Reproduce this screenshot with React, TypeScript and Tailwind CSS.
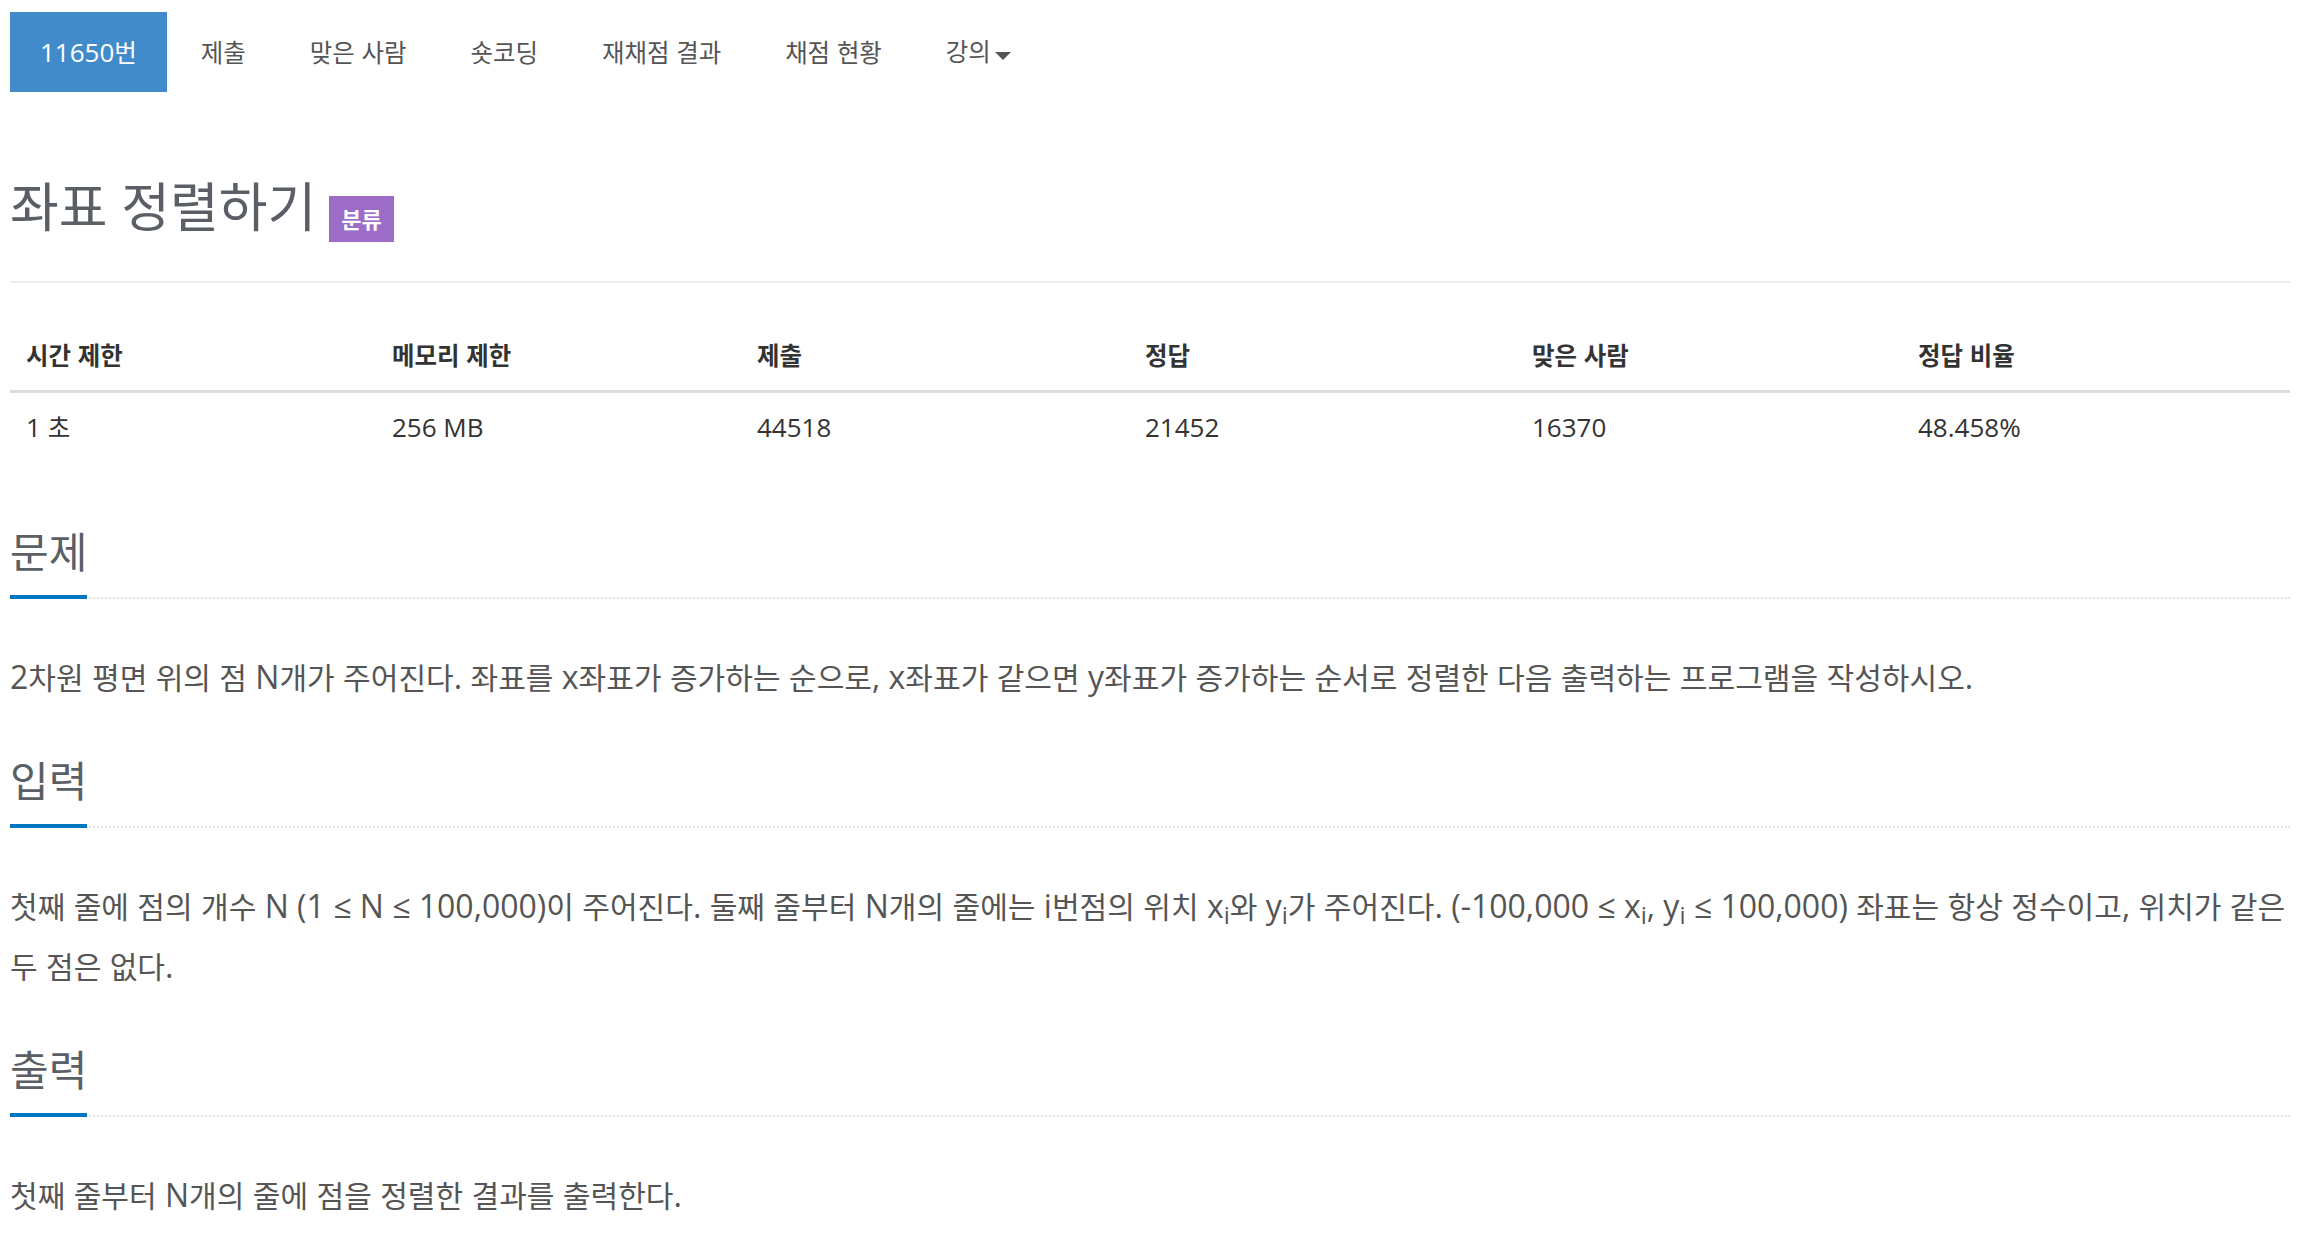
import type { ReactNode } from 'react';

const HANGUL = /([\uAC00-\uD7A3]+)/;

// Hangul runs are set a bit smaller so Noto's full-width glyphs line up with the Latin text
function Ko({ children }: { children: string }) {
    return (
        <>
            {children.split(HANGUL).map((part, i) =>
                HANGUL.test(part) ? (
                    <span key={i} className="text-[0.94em] leading-none">
                        {part}
                    </span>
                ) : (
                    part
                )
            )}
        </>
    );
}

const tabs = ['제출', '맞은 사람', '숏코딩', '재채점 결과', '채점 현황'];

const stats = [
    { label: '시간 제한', value: '1 초' },
    { label: '메모리 제한', value: '256 MB' },
    { label: '제출', value: '44518' },
    { label: '정답', value: '21452' },
    { label: '맞은 사람', value: '16370' },
    { label: '정답 비율', value: '48.458%' },
];

function Section({ title, first, children }: { title: string; first?: boolean; children: ReactNode }) {
    return (
        <section className={first ? 'mt-[68px]' : 'mt-[52px]'}>
            <div className="flex border-b-2 border-dotted border-[#dfe4ea]">
                <h2 className="-mb-[2px] border-b-4 border-[#0076c0] pb-[21px] text-[42px] leading-[44px] font-normal text-[#5a5f66]">
                    {title}
                </h2>
            </div>
            <div className="mt-[48px] text-[32px] leading-[60px] text-[#555]">{children}</div>
        </section>
    );
}

export default function App() {
    return (
        <div className="min-h-screen bg-white font-['Open_Sans','Noto_Sans_CJK_KR',sans-serif] text-[#555]">
            <div className="pl-[10px] pr-[18px] pt-[12px]">
                {/* Problem tabs */}
                <ul className="flex gap-[4px] text-[26px]">
                    <li className="bg-[#428bca] px-[30px] py-[20px] leading-[40px] text-white">
                        <Ko>11650번</Ko>
                    </li>
                    {tabs.map((t) => (
                        <li key={t} className="px-[30px] py-[20px] leading-[40px] text-[#555]">
                            <Ko>{t}</Ko>
                        </li>
                    ))}
                    <li className="flex items-center px-[30px] py-[20px] leading-[40px] text-[#555]">
                        <Ko>강의</Ko>
                        <span className="ml-[4px] mt-[8px] inline-block h-0 w-0 border-x-[8px] border-t-[8px] border-x-transparent border-t-[#555]" />
                    </li>
                </ul>

                {/* Title */}
                <div className="mt-[84px] flex items-start border-b-2 border-[#eee] pb-[39px]">
                    <h1 className="text-[53px] leading-[62px] font-normal text-[#5a5f66]">좌표 정렬하기</h1>
                    <span className="ml-[13px] mt-[20px] flex h-[46px] items-center bg-[#9d6cc6] px-[12px] text-[22px] font-bold text-white">
                        분류
                    </span>
                </div>

                {/* Limits table */}
                <div className="mt-[38px] grid grid-cols-[366px_365px_388px_387px_386px_1fr] text-[26px] leading-[37px] text-[#333]">
                    {stats.map((s) => (
                        <div key={s.label} className="border-b-[3px] border-[#ddd] px-[16px] py-[16px] font-bold">
                            <Ko>{s.label}</Ko>
                        </div>
                    ))}
                    {stats.map((s) => (
                        <div key={s.label} className="px-[16px] py-[16px]">
                            <Ko>{s.value}</Ko>
                        </div>
                    ))}
                </div>

                <Section title="문제" first>
                    <p>
                        <Ko>
                            2차원 평면 위의 점 N개가 주어진다. 좌표를 x좌표가 증가하는 순으로, x좌표가 같으면 y좌표가 증가하는 순서로 정렬한 다음 출력하는 프로그램을 작성하시오.
                        </Ko>
                    </p>
                </Section>

                <Section title="입력">
                    <p>
                        <Ko>첫째 줄에 점의 개수 N (1 ≤ N ≤ 100,000)이 주어진다. 둘째 줄부터 N개의 줄에는 i번점의 위치 x</Ko>
                        <sub>i</sub>
                        <Ko>와 y</Ko>
                        <sub>i</sub>
                        <Ko>가 주어진다. (-100,000 ≤ x</Ko>
                        <sub>i</sub>
                        <Ko>, y</Ko>
                        <sub>i</sub>
                        <Ko> ≤ 100,000) 좌표는 항상 정수이고, 위치가 같은 두 점은 없다.</Ko>
                    </p>
                </Section>

                <Section title="출력">
                    <p>
                        <Ko>첫째 줄부터 N개의 줄에 점을 정렬한 결과를 출력한다.</Ko>
                    </p>
                </Section>
            </div>
        </div>
    );
}
